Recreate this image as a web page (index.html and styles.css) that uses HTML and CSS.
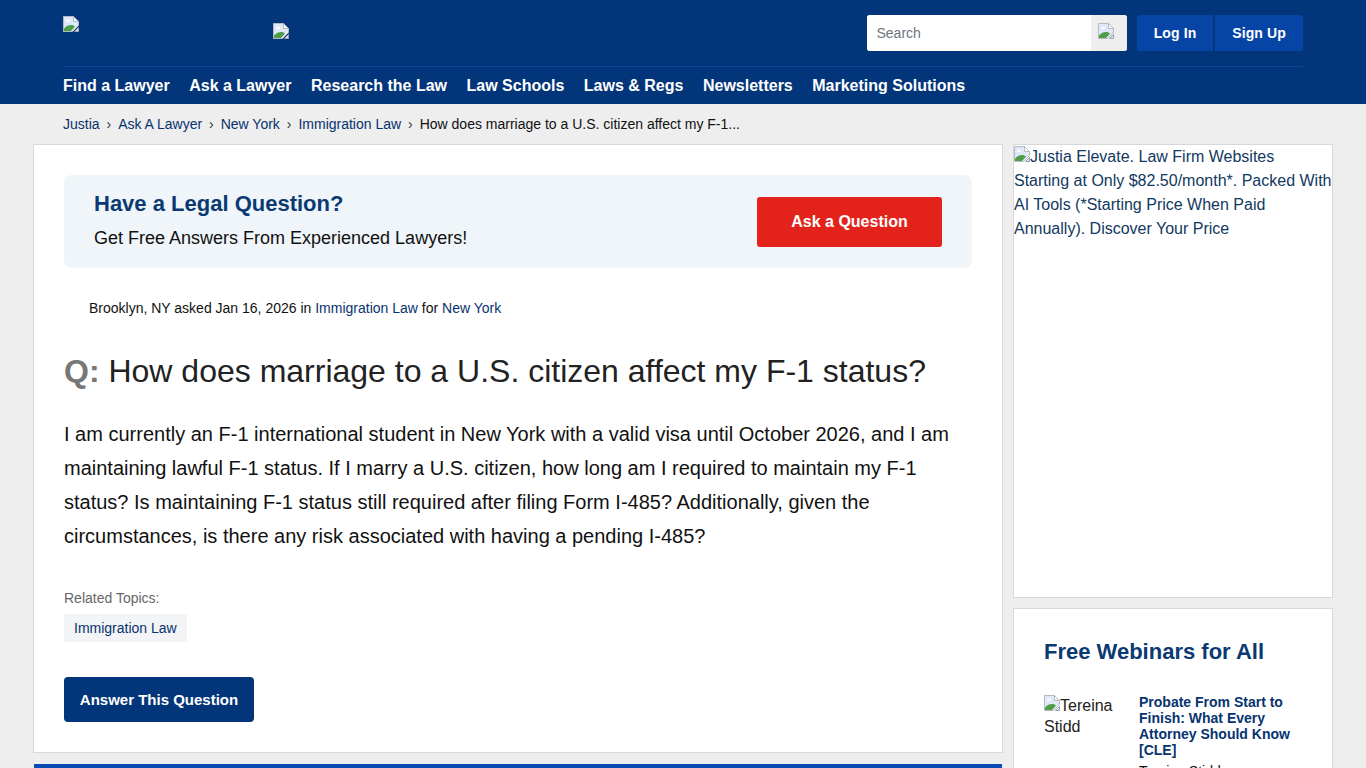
FILE: index.html
```html
<!DOCTYPE html>
<html lang="en">
<head>
<meta charset="utf-8">
<title>How does marriage to a U.S. citizen affect my F-1 status?</title>
<link rel="stylesheet" href="styles.css">
</head>
<body>
<svg class="defs" width="0" height="0" aria-hidden="true">
  <symbol id="broken" viewBox="0 0 16 16">
    <path d="M0.5 0.5H10.5L15.5 5.5V9.5L9.5 15.5H0.5Z" fill="#dfe8f8" stroke="#b4bac4" stroke-width="1"/>
    <path d="M10.5 0.5V5.5H15.5Z" fill="#ffffff" stroke="#b4bac4"/>
    <path d="M1 15V12.5C3.5 9.5 6.5 8.5 9.5 9L12 10.5L8 15Z" fill="#4e9e45"/>
    <path d="M3 3.5H7V6H3Z" fill="#f4f7fd"/>
    <path d="M15.5 11.5V15.5H11.5Z" fill="#e6e8ec" stroke="#9aa2ae"/>
  </symbol>
</svg>
<header class="site-header">
  <div class="header-inner">
    <div class="top-row">
      <div class="logos">
        <a class="logo-main" href="#"><svg class="broken"><use href="#broken"/></svg></a>
        <a class="logo-sub" href="#"><svg class="broken"><use href="#broken"/></svg></a>
      </div>
      <div class="top-actions">
        <form class="search">
          <input class="search-input" type="text" placeholder="Search">
          <button class="search-btn" type="button"><svg class="broken"><use href="#broken"/></svg></button>
        </form>
        <div class="auth">
          <a class="auth-btn" href="#">Log In</a>
          <a class="auth-btn signup" href="#">Sign Up</a>
        </div>
      </div>
    </div>
    <nav class="main-nav">
      <a href="#">Find a Lawyer</a>
      <a href="#">Ask a Lawyer</a>
      <a href="#">Research the Law</a>
      <a href="#">Law Schools</a>
      <a href="#">Laws &amp; Regs</a>
      <a href="#">Newsletters</a>
      <a href="#">Marketing Solutions</a>
    </nav>
  </div>
</header>

<nav class="crumbs">
  <a href="#">Justia</a><span class="sep">›</span>
  <a href="#">Ask A Lawyer</a><span class="sep">›</span>
  <a href="#">New York</a><span class="sep">›</span>
  <a href="#">Immigration Law</a><span class="sep">›</span>
  <span class="current">How does marriage to a U.S. citizen affect my F-1...</span>
</nav>

<div class="layout">
  <main class="main-col">
    <section class="card question-card">
      <div class="promo">
        <div class="promo-text">
          <h2>Have a Legal Question?</h2>
          <p>Get Free Answers From Experienced Lawyers!</p>
        </div>
        <a class="promo-btn" href="#">Ask a Question</a>
      </div>
      <p class="meta">Brooklyn, NY asked Jan 16, 2026 in <a href="#">Immigration Law</a> for <a href="#">New York</a></p>
      <h1 class="q-title"><span class="q-mark">Q:</span> How does marriage to a U.S. citizen affect my F-1 status?</h1>
      <p class="q-body">I am currently an F-1 international student in New York with a valid visa until October 2026, and I am maintaining lawful F-1 status. If I marry a U.S. citizen, how long am I required to maintain my F-1 status? Is maintaining F-1 status still required after filing Form I-485? Additionally, given the circumstances, is there any risk associated with having a pending I-485?</p>
      <div class="related-label">Related Topics:</div>
      <a class="tag" href="#">Immigration Law</a>
      <div><a class="answer-btn" href="#">Answer This Question</a></div>
    </section>
    <section class="answers-card"></section>
  </main>

  <aside class="side-col">
    <div class="card ad-card">
      <a class="ad-link" href="#"><svg class="broken inline"><use href="#broken"/></svg>Justia Elevate. Law Firm Websites Starting at Only $82.50/month*. Packed With AI Tools (*Starting Price When Paid Annually). Discover Your Price</a>
    </div>
    <div class="card webinars">
      <h3>Free Webinars for All</h3>
      <div class="webinar">
        <div class="speaker-img"><svg class="broken inline"><use href="#broken"/></svg>Tereina Stidd</div>
        <div class="webinar-info">
          <a class="webinar-title" href="#">Probate From Start to Finish: What Every Attorney Should Know [CLE]</a>
          <div class="webinar-speaker">Tereina Stidd</div>
        </div>
      </div>
    </div>
  </aside>
</div>
</body>
</html>
```
FILE: styles.css
```css
* { box-sizing: border-box; }
html, body { margin: 0; padding: 0; }
body {
  background: #eeeeee;
  color: #111;
  font-family: "Liberation Sans", Arial, sans-serif;
  font-size: 16px;
}
a { color: #07336f; text-decoration: none; }
.defs { position: absolute; }
.broken { width: 16px; height: 16px; display: block; }
.broken.inline { display: inline-block; vertical-align: baseline; }

.site-header { background: #03357a; height: 104px; }
.header-inner { width: 1240px; margin-left: 63px; }
.top-row {
  height: 67px;
  border-bottom: 1px solid #0c479c;
  display: flex;
  justify-content: space-between;
  padding-top: 15px;
}
.logos { display: flex; }
.logo-main { width: 210px; margin-top: 1px; }
.logo-sub { margin-top: 8px; }
.top-actions { display: flex; gap: 10px; height: 36px; }
.search { display: flex; width: 260px; height: 36px; background: #fff; border-radius: 3px; overflow: hidden; margin: 0; }
.search-input {
  flex: 1;
  min-width: 0;
  border: 0;
  outline: 0;
  padding: 0 0 0 9.5px;
  font: 14px "Liberation Sans", Arial, sans-serif;
  color: #111;
}
.search-input::placeholder { color: #6d7480; opacity: 1; }
.search-btn {
  width: 36px;
  border: 0;
  padding: 8px 0 0 7px;
  background: #eeeeee;
  display: flex;
  align-items: flex-start;
}
.auth { display: flex; gap: 2px; }
.auth-btn {
  background: #0645a5;
  color: #fff;
  font-size: 14px;
  font-weight: 700;
  height: 36px;
  line-height: 36px;
  width: 76px;
  text-align: center;
  border-radius: 3px 0 0 3px;
  letter-spacing: .1px;
}
.auth-btn.signup { width: 88px; border-radius: 0 3px 3px 0; }

.main-nav { display: flex; gap: 19.5px; height: 37px; line-height: 37px; }
.main-nav a { color: #fff; font-size: 16px; font-weight: 700; }

.crumbs {
  height: 40px;
  padding-left: 63px;
  font-size: 14px;
  line-height: 40px;
  display: flex;
}
.crumbs .sep { margin: 0 6.95px; color: #333; }
.crumbs .current { color: #111; }

.layout { display: flex; gap: 10px; padding-left: 33px; align-items: flex-start; }
.main-col { width: 970px; }
.side-col { width: 320px; }
.card { background: #fff; border: 1px solid #d8d8d8; }

.question-card { padding: 30px 30px 30px; height: 609px; }
.promo {
  height: 93px;
  background: #eff5f9;
  border-radius: 8px;
  padding: 0 30px;
  display: flex;
  justify-content: space-between;
  align-items: center;
}
.promo-text { margin-top: -4px; }
.promo h2 { margin: 0; color: #0b3a73; font-size: 22px; line-height: 26px; font-weight: 700; }
.promo p { margin: 10px 0 0; font-size: 18px; line-height: 22px; color: #111; }
.promo-btn {
  width: 185px;
  height: 50px;
  line-height: 50px;
  background: #e3231b;
  color: #fff;
  font-size: 16px;
  font-weight: 700;
  text-align: center;
  border-radius: 3px;
}
.meta { margin: 31px 0 0 25px; font-size: 14px; line-height: 18px; color: #111; }
.q-title { margin: 34px 0 0; font-size: 32px; line-height: 40px; font-weight: 400; color: #222; }
.q-mark { font-weight: 700; color: #777; }
.q-body { margin: 26px 0 0; font-size: 20px; line-height: 34px; color: #111; }
.related-label { margin-top: 36px; font-size: 14px; line-height: 18px; color: #666; }
.tag {
  display: inline-block;
  margin-top: 7px;
  height: 28px;
  line-height: 28px;
  padding: 0 10px;
  background: #f3f4f6;
  font-size: 14px;
  border-radius: 2px;
}
.answer-btn {
  display: inline-block;
  margin-top: 35px;
  width: 190px;
  height: 45px;
  line-height: 45px;
  text-align: center;
  background: #03357a;
  color: #fff;
  font-size: 15px;
  font-weight: 700;
  border-radius: 4px;
}
.answers-card { margin: 11px 1px 0; height: 300px; background: #fff; border-top: 4px solid #0b4cb4; }

.ad-card { height: 454px; line-height: 24px; }
.ad-link { color: #12395f; }
.webinars { margin-top: 10px; padding: 30px; height: 400px; }
.webinars h3 { margin: 0; color: #0b3a73; font-size: 22px; line-height: 26px; font-weight: 700; }
.webinar { display: flex; margin-top: 29px; }
.speaker-img { width: 95px; padding-right: 20px; font-size: 16px; line-height: 21px; flex: none; color: #222; padding-top: 1px; }
.webinar-title { display: block; font-size: 14px; line-height: 16px; font-weight: 700; }
.webinar-speaker { font-size: 14px; line-height: 20px; margin-top: 3px; }
```
